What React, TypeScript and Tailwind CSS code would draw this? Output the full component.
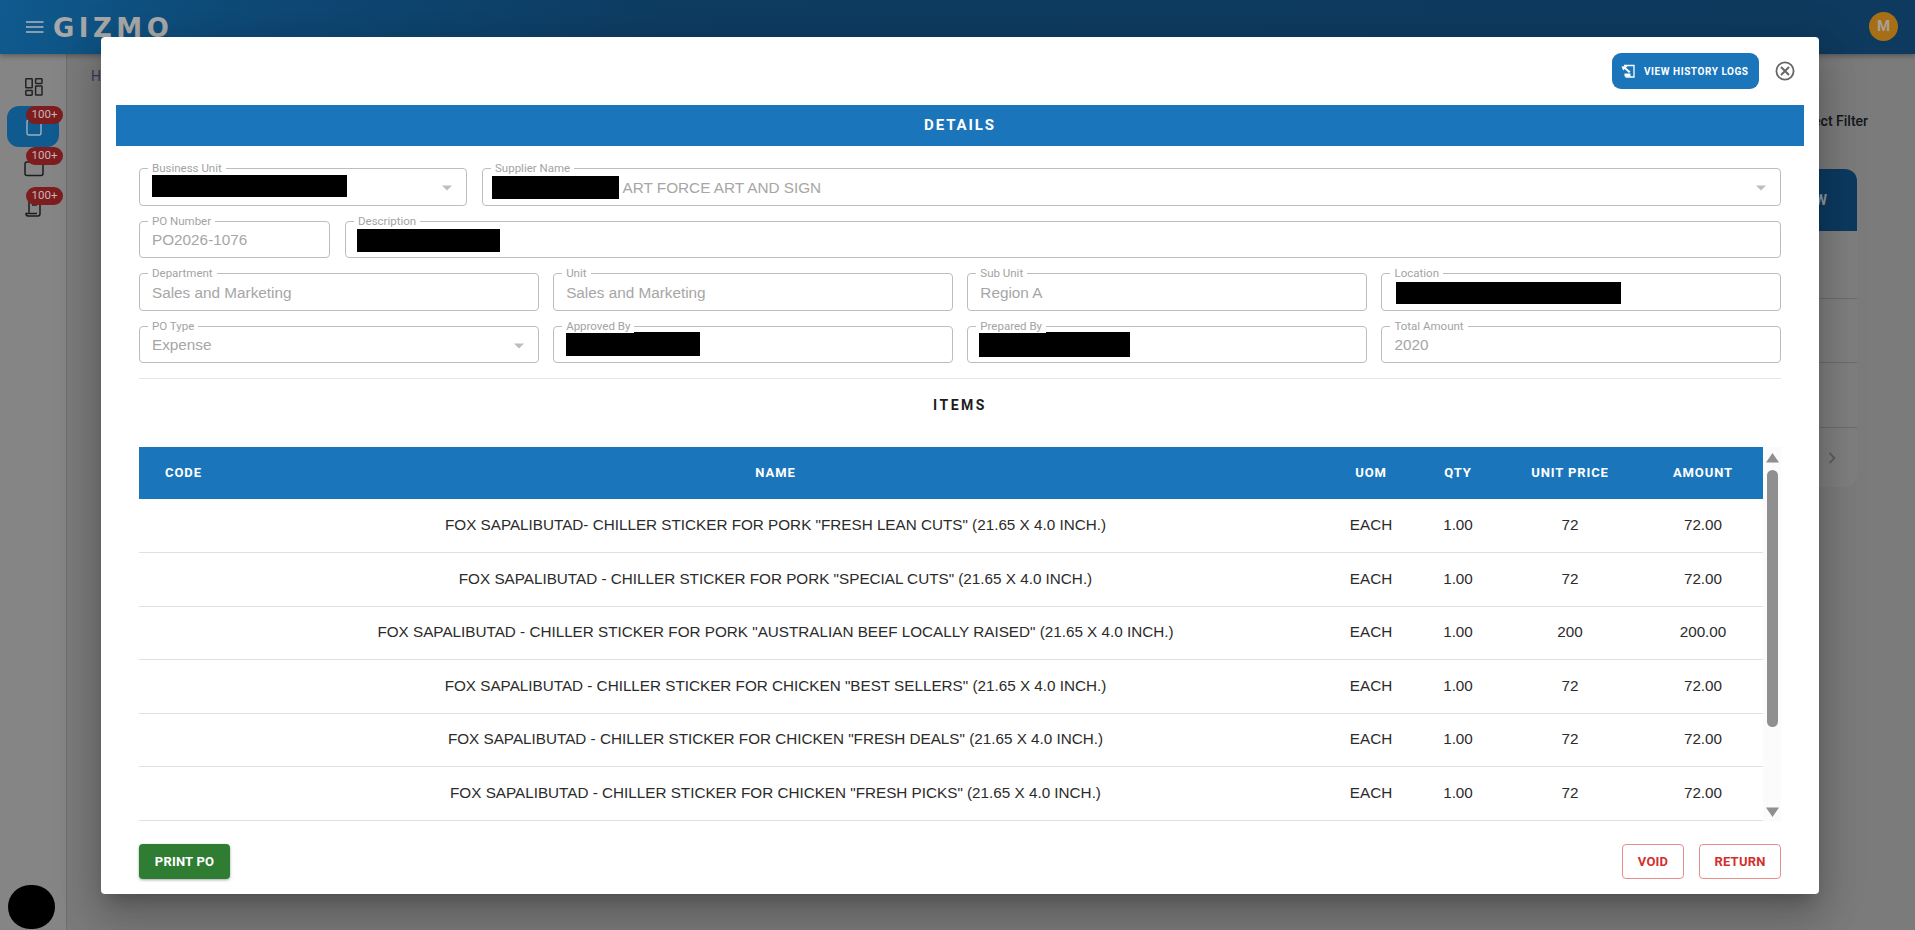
import React from "react";

const rows = [
  ['FOX SAPALIBUTAD- CHILLER STICKER FOR PORK "FRESH LEAN CUTS" (21.65 X 4.0 INCH.)', "72", "72.00"],
  ['FOX SAPALIBUTAD - CHILLER STICKER FOR PORK "SPECIAL CUTS" (21.65 X 4.0 INCH.)', "72", "72.00"],
  ['FOX SAPALIBUTAD - CHILLER STICKER FOR PORK "AUSTRALIAN BEEF LOCALLY RAISED" (21.65 X 4.0 INCH.)', "200", "200.00"],
  ['FOX SAPALIBUTAD - CHILLER STICKER FOR CHICKEN "BEST SELLERS" (21.65 X 4.0 INCH.)', "72", "72.00"],
  ['FOX SAPALIBUTAD - CHILLER STICKER FOR CHICKEN "FRESH DEALS" (21.65 X 4.0 INCH.)', "72", "72.00"],
  ['FOX SAPALIBUTAD - CHILLER STICKER FOR CHICKEN "FRESH PICKS" (21.65 X 4.0 INCH.)', "72", "72.00"],
];

function Arrow() {
  return (
    <svg width="10" height="6" viewBox="0 0 10 6" className="absolute right-[14px] top-[16px]">
      <path d="M0 0.5H10L5 5.5Z" fill="#bdbdbd" />
    </svg>
  );
}

function Field({
  label,
  value,
  black,
  arrow,
  prefix,
}: {
  label: string;
  value?: string;
  black?: string;
  arrow?: boolean;
  prefix?: boolean;
}) {
  return (
    <div className="relative h-[37.5px] rounded-[4px] border border-[#bdbdbd] flex items-center min-w-0">
      <span className="absolute left-[8px] top-[-8px] bg-white px-[4px] font-['Roboto',sans-serif] text-[11.5px] leading-[14px] text-[#a3a3a3]">
        {label}
      </span>
      {black && <span className={black} />}
      {value && (
        <span
          className={`${prefix ? "ml-[-5px]" : "ml-[12px]"} pt-[2px] text-[15.3px] leading-[20px] text-[#a6a6a6] whitespace-nowrap`}
        >
          {value}
        </span>
      )}
      {arrow && <Arrow />}
    </div>
  );
}

function Badge({ className }: { className: string }) {
  return (
    <span
      className={`absolute left-[26px] h-[18px] w-[37px] rounded-full bg-[#7d1d1f] flex items-center justify-center font-['Roboto',sans-serif] text-[11.5px] text-[#c6b6b6] ${className}`}
    >
      100+
    </span>
  );
}

export default function App() {
  return (
    <div className="relative h-[930px] w-full overflow-hidden bg-[#7b7b7b] font-['Liberation_Sans',Arial,sans-serif]">
      <header className="relative z-10 h-[54px] bg-[linear-gradient(100deg,#0f5a8e_0%,#0e4a77_12%,#0e3c62_35%,#0e3a5f_100%)] shadow-[0_2px_5px_rgba(0,0,0,0.3)] flex items-start">
        <svg width="18" height="12" viewBox="0 0 18 12" className="ml-[26px] mt-[21px]">
          <path d="M0 1H17.5M0 6H17.5M0 11H17.5" stroke="#aeb7bd" strokeWidth="1.6" />
        </svg>
        <span className="ml-[9px] mt-[12px] font-['DejaVu_Sans',sans-serif] font-bold text-[26px] leading-[32px] tracking-[4.5px] text-[#a8a8a8]">
          GIZMO
        </span>
        <span className="ml-auto mr-[17px] mt-[12px] h-[29px] w-[29px] rounded-full bg-[#a66f16] flex items-center justify-center font-['Roboto',sans-serif] font-bold text-[15px] text-[#a8a096]">
          M
        </span>
      </header>

      <div className="flex h-[876px]">
        <aside className="relative w-[67px] shrink-0 border-r border-[#6e6e6e] bg-[#858585]">
          <svg width="18" height="18" viewBox="0 0 18 18" fill="none" stroke="#232323" strokeWidth="1.5" className="absolute left-[24.5px] top-[24px]">
            <rect x="0.8" y="0.8" width="6.4" height="9" rx="0.6" />
            <rect x="10.6" y="0.8" width="6.4" height="4.6" rx="0.6" />
            <rect x="10.6" y="8" width="6.4" height="9" rx="0.6" />
            <rect x="0.8" y="12.6" width="6.4" height="4.6" rx="0.6" />
          </svg>
          <div className="absolute left-[7px] top-[52px] h-[41px] w-[52px] rounded-[12px] bg-[#0f5a8e]" />
          <svg width="16" height="18" viewBox="0 0 16 18" fill="none" stroke="#9fb0bd" strokeWidth="1.4" className="absolute left-[25.5px] top-[64px]">
            <rect x="1" y="2" width="14" height="15" rx="2" />
          </svg>
          <svg width="20" height="16" viewBox="0 0 20 16" fill="none" stroke="#1c1c1c" strokeWidth="1.5" className="absolute left-[23.5px] top-[107px]">
            <rect x="1" y="1" width="18" height="13.5" rx="2" />
          </svg>
          <svg width="18" height="20" viewBox="0 0 18 20" fill="none" stroke="#1c1c1c" strokeWidth="1.5" className="absolute left-[24.5px] top-[143px]">
            <path d="M4 1V15.5M15 1V16.5C15 18 14 19 13 19H3C1.8 19 1 18 1 16.5H12" />
            <path d="M7 8H12" />
          </svg>
          <Badge className="top-[52px]" />
          <Badge className="top-[93px]" />
          <Badge className="top-[133px]" />
          <span className="absolute left-[8px] bottom-[1px] h-[44px] w-[47px] rounded-full bg-black" />
        </aside>

        <main className="flex-1 min-w-0 pl-[24px] pr-[47px] pt-[14px] flex flex-col">
          <div className="font-['Roboto',sans-serif] text-[14px] leading-[16px] text-[#3b3a5e]">Home</div>
          <div className="mt-[29px] text-right font-['Roboto',sans-serif] font-medium text-[14px] leading-[16px] text-[#14171d]">
            Select Filter
          </div>
          <section className="mt-[40px] ml-[100px] mr-[11px] rounded-[12px] bg-[#7f7f7f] overflow-hidden">
            <div className="h-[62px] bg-[#0c3a60] flex items-center justify-end pr-[30px] font-['Roboto',sans-serif] font-bold text-[14px] text-[#8f9aa3]">
              VIEW
            </div>
            <div className="h-[68px] border-b border-[#6c6c6c]" />
            <div className="h-[64px] border-b border-[#6c6c6c]" />
            <div className="h-[65px] border-b border-[#6c6c6c]" />
            <div className="h-[59px] flex items-center justify-end pr-[20px]">
              <svg width="9" height="12" viewBox="0 0 9 12" fill="none" stroke="#5d5d5d" strokeWidth="1.8">
                <path d="M1.5 1L6.5 6L1.5 11" />
              </svg>
            </div>
          </section>
        </main>
      </div>

      <div className="absolute left-[101px] top-[37px] z-20 w-[1718px] h-[857px] rounded-[4px] bg-white px-[15px] shadow-[0_11px_15px_-7px_rgba(0,0,0,0.2),0_24px_38px_3px_rgba(0,0,0,0.14),0_9px_46px_8px_rgba(0,0,0,0.12)]">
        <div className="h-[68px] flex items-start justify-end pt-[16px] pr-[9px]">
          <button className="h-[36px] w-[147px] rounded-[9px] bg-[#1a75bb] flex items-center pl-[9px] font-['Roboto',sans-serif] font-bold text-[10px] tracking-[0.55px] text-white">
            <svg width="14" height="14" viewBox="0 0 14 14" className="shrink-0">
              <path d="M3 1.5H13V13H4.5" fill="none" stroke="#fff" strokeWidth="1.3" />
              <path d="M0.5 2.5L6.5 2L5 3.7L9.5 7.5L8 9L3.6 5L2.2 6.5Z" fill="#fff" />
              <path d="M3.5 9.5H9.5V12.5H3.5Z" fill="#fff" />
            </svg>
            <span className="ml-[9px] whitespace-nowrap">VIEW HISTORY LOGS</span>
          </button>
          <svg width="20" height="20" viewBox="0 0 20 20" fill="none" stroke="#666" className="ml-[16px] mt-[8px] shrink-0">
            <circle cx="10" cy="10" r="8.6" strokeWidth="1.8" />
            <path d="M6 6L14 14M14 6L6 14" strokeWidth="2" />
          </svg>
        </div>

        <div className="h-[41px] bg-[#1a75bb] flex items-center justify-center font-['Roboto',sans-serif] font-bold text-[15px] tracking-[1.9px] text-white">
          DETAILS
        </div>

        <div className="mx-[23px] mt-[22px] flex flex-col gap-y-[15px]">
          <div className="grid grid-cols-[328px_1fr] gap-x-[15px]">
            <Field label="Business Unit" black="ml-[12px] w-[195px] h-[22px] mb-[2px] bg-black" arrow />
            <Field label="Supplier Name" black="relative z-10 ml-[9px] w-[127px] h-[23px] mt-[2px] bg-black" value="- ART FORCE ART AND SIGN" prefix arrow />
          </div>
          <div className="grid grid-cols-[191px_1fr] gap-x-[15px]">
            <Field label="PO Number" value="PO2026-1076" />
            <Field label="Description" black="ml-[11px] w-[143px] h-[23px] mt-[3px] bg-black" />
          </div>
          <div className="grid grid-cols-4 gap-x-[14.67px]">
            <Field label="Department" value="Sales and Marketing" />
            <Field label="Unit" value="Sales and Marketing" />
            <Field label="Sub Unit" value="Region A" />
            <Field label="Location" black="ml-[14px] w-[225px] h-[22px] mt-[2px] bg-black" />
          </div>
          <div className="grid grid-cols-4 gap-x-[14.67px]">
            <Field label="PO Type" value="Expense" arrow />
            <Field label="Approved By" black="ml-[12px] w-[134px] h-[24px] bg-black" />
            <Field label="Prepared By" black="ml-[11px] w-[151px] h-[25px] bg-black" />
            <Field label="Total Amount" value="2020" />
          </div>
        </div>

        <div className="mx-[23px] mt-[15px] border-t border-[#e6e6e6]" />
        <div className="mt-[16px] mb-[-1px] text-center font-['Roboto',sans-serif] font-bold text-[14px] leading-[20px] tracking-[2.5px] text-[#1c1c1c]">
          ITEMS
        </div>

        <div className="mx-[23px] mt-[33px] h-[374px] flex">
          <div className="flex-1 min-w-0 overflow-hidden">
            <table className="w-full table-fixed border-collapse">
              <colgroup>
                <col className="w-[89px]" />
                <col />
                <col className="w-[96px]" />
                <col className="w-[78px]" />
                <col className="w-[146px]" />
                <col className="w-[120px]" />
              </colgroup>
              <thead>
                <tr className="h-[52px] bg-[#1a75bb] font-['Roboto',sans-serif] font-bold text-[13px] tracking-[0.9px] text-white">
                  <th>CODE</th>
                  <th>NAME</th>
                  <th>UOM</th>
                  <th>QTY</th>
                  <th>UNIT PRICE</th>
                  <th>AMOUNT</th>
                </tr>
              </thead>
              <tbody>
                {rows.map((r) => (
                  <tr key={r[0]} className="h-[53.5px] border-b border-[#e0e0e0] text-[15.25px] text-[#2b2b2b] text-center">
                    <td />
                    <td className="whitespace-nowrap">{r[0]}</td>
                    <td>EACH</td>
                    <td>1.00</td>
                    <td>{r[1]}</td>
                    <td>{r[2]}</td>
                  </tr>
                ))}
              </tbody>
            </table>
          </div>
          <div className="w-[18px] shrink-0 bg-[#fbfbfb] flex flex-col items-center pt-[6px] pb-[4px]">
            <svg width="13" height="10" viewBox="0 0 13 10">
              <path d="M6.5 0L13 9.5H0Z" fill="#8f8f8f" />
            </svg>
            <div className="mt-[7px] h-[257px] w-[11px] rounded-full bg-[#8f8f8f]" />
            <svg width="13" height="10" viewBox="0 0 13 10" className="mt-auto">
              <path d="M0 0.5H13L6.5 10Z" fill="#8f8f8f" />
            </svg>
          </div>
        </div>

        <div className="mx-[23px] mt-[23px] flex items-center justify-between font-['Roboto',sans-serif] font-bold text-[13px] tracking-[0.2px]">
          <button className="h-[35px] w-[91px] rounded-[4px] bg-[#2e7d32] text-white shadow-[0_1px_3px_rgba(0,0,0,0.35)]">
            PRINT PO
          </button>
          <div className="flex gap-x-[15px]">
            <button className="h-[35px] w-[62px] rounded-[4px] border border-[#e88b8b] text-[#d32f2f]">VOID</button>
            <button className="h-[35px] w-[82px] rounded-[4px] border border-[#e88b8b] text-[#d32f2f]">RETURN</button>
          </div>
        </div>
      </div>
    </div>
  );
}
